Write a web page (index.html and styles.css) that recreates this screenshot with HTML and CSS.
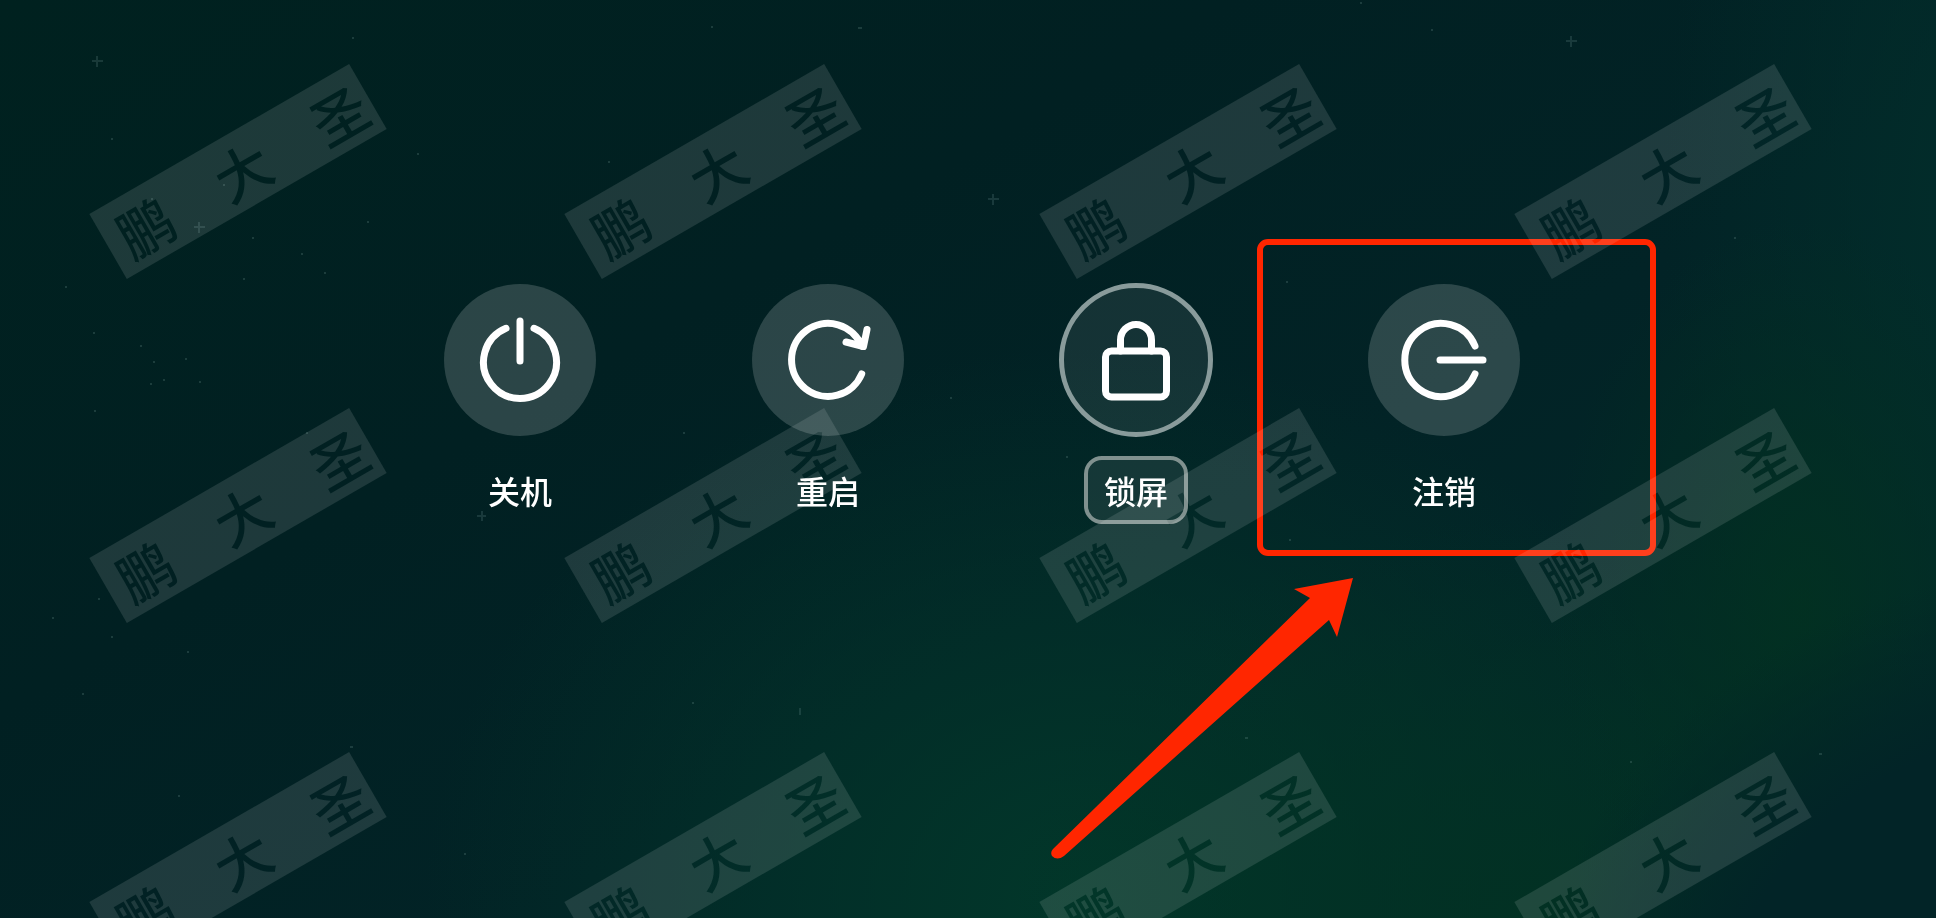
FILE: index.html
```html
<!DOCTYPE html>
<html lang="zh-CN">
<head>
<meta charset="utf-8">
<title>电源选项</title>
<link rel="stylesheet" href="styles.css">
</head>
<body>
<svg class="stars" aria-hidden="true">
  <g class="crosses">
    <path d="M92 61h11M97 56v11M194 227h11M199 222v11M1566 41h11M1571 36v11M988 199h11M993 194v11M477 516h9M482 511v10M800 708v7"/>
  </g>
  <g class="dots">
    <path d="M111 139h2M223 185h2M151 199h2M608 162h2M301 254h2M367 222h2M417 154h2M65 287h2M252 238h2M324 273h2M243 279h2M93 333h2M140 346h2M153 362h2M163 380h2M150 384h2M199 382h2M185 359h2M94 411h2M306 433h2M683 433h2M950 398h2M1734 238h2M858 28h4M711 27h2M1431 30h2M98 599h2M187 652h2M111 637h2M52 618h2M82 694h2M350 747h3M1245 738h3M1630 762h2M1819 754h3M692 703h2M178 796h2M464 854h2M1289 540h2M1066 457h2M1286 282h2M352 38h2M1360 3h2"/>
  </g>
</svg>
<main class="screen">
  <div class="options">
    <button class="option" type="button">
      <span class="disc">
        <svg class="icon" viewBox="-76 -76 152 152" aria-hidden="true"><path d="M-14-31.7A36.5 36.5 0 1 0 14-31.7M0-39V1"/></svg>
      </span>
      <span class="label">关机</span>
    </button>
    <button class="option" type="button">
      <span class="disc">
        <svg class="icon" viewBox="-76 -76 152 152" aria-hidden="true"><path d="M33.7 14A36.5 36.5 0 1 1 34-13.5M39-30.5L35.5-13.5L18-18"/></svg>
      </span>
      <span class="label">重启</span>
    </button>
    <button class="option selected" type="button">
      <span class="disc">
        <svg class="icon" viewBox="-76 -76 152 152" aria-hidden="true"><rect x="-30.5" y="-9" width="61" height="46" rx="6"/><path d="M-15.5-9V-20a15.5 15.5 0 0 1 31 0V-9"/></svg>
      </span>
      <span class="label">锁屏</span>
    </button>
    <button class="option" type="button">
      <span class="disc">
        <svg class="icon" viewBox="-76 -76 152 152" aria-hidden="true"><path d="M31-14A36.5 36.5 0 1 0 31 14M-4 0H39"/></svg>
      </span>
      <span class="label">注销</span>
    </button>
    <div class="highlight"></div>
    <svg class="arrow" viewBox="0 0 304 284" aria-hidden="true"><path d="M303 1L244 12L260 21L3 272Q0 275 2 279Q7 284 14 279L279 43L287 60Z"/></svg>
  </div>
</main>
<div class="watermarks">
  <div class="cell"><span class="mark">鹏　大　圣</span></div>
  <div class="cell"><span class="mark">鹏　大　圣</span></div>
  <div class="cell"><span class="mark">鹏　大　圣</span></div>
  <div class="cell"><span class="mark">鹏　大　圣</span></div>
  <div class="cell"><span class="mark">鹏　大　圣</span></div>
  <div class="cell"><span class="mark">鹏　大　圣</span></div>
  <div class="cell"><span class="mark">鹏　大　圣</span></div>
  <div class="cell"><span class="mark">鹏　大　圣</span></div>
  <div class="cell"><span class="mark">鹏　大　圣</span></div>
  <div class="cell"><span class="mark">鹏　大　圣</span></div>
  <div class="cell"><span class="mark">鹏　大　圣</span></div>
  <div class="cell"><span class="mark">鹏　大　圣</span></div>
</div>
</body>
</html>
```
FILE: styles.css
```css
* {
  box-sizing: border-box;
}

body {
  position: relative;
  margin: 0;
  min-height: 100vh;
  overflow: hidden;
  color: #fff;
  font-family: "Noto Sans CJK SC", sans-serif;
  background:
    radial-gradient(ellipse 25% 44% at 108% 112%, #022427 75%, transparent 115%),
    radial-gradient(ellipse 13% 42% at 93% 66%, rgba(2, 50, 32, .8), transparent 100%),
    radial-gradient(ellipse 28% 44% at 80% 100%, rgba(2, 50, 34, .85), transparent 100%),
    radial-gradient(ellipse 34% 60% at 56% 98%, rgba(2, 56, 42, .95), transparent 100%),
    radial-gradient(ellipse 16% 75% at 102% 22%, rgba(2, 46, 43, .9), transparent 100%),
    linear-gradient(150deg, #00211f 0%, #012022 35%, #022326 60%, #022a2a 100%);
}

.stars {
  position: absolute;
  inset: 0;
  width: 100%;
  height: 100%;
  stroke: #7fa29f;
  stroke-width: 2;
  fill: none;
}

.crosses {
  opacity: .2;
}

.dots {
  opacity: .22;
}

.screen {
  position: relative;
  display: flex;
  justify-content: center;
  padding: 283px 0 0 28px;
}

.options {
  position: relative;
  display: grid;
  grid-template-columns: repeat(4, 308px);
}

.option {
  display: flex;
  flex-direction: column;
  align-items: center;
  gap: 19px;
  padding: 0;
  border: 0;
  background: none;
  color: inherit;
  font: inherit;
  cursor: pointer;
}

.disc {
  display: flex;
  align-items: center;
  justify-content: center;
  width: 154px;
  height: 154px;
  border: 1px solid transparent;
  border-radius: 50%;
  background: rgba(255, 255, 255, .17) padding-box;
}

.icon {
  flex: none;
  width: 152px;
  height: 152px;
  fill: none;
  stroke: #fff;
  stroke-width: 7;
  stroke-linecap: round;
  stroke-linejoin: round;
}

.label {
  padding: 10px 16px;
  border: 4px solid transparent;
  border-radius: 18px;
  font-size: 32px;
  font-weight: 500;
  line-height: 40px;
}

.selected .disc {
  border: 5px solid #899b9b;
  background: rgba(255, 255, 255, .08);
}

.selected .label {
  border-color: #80918f;
  background: rgba(255, 255, 255, .08) padding-box;
}

.highlight {
  position: absolute;
  top: -44px;
  left: 891px;
  width: 399px;
  height: 317px;
  border: 6px solid #ff2600;
  border-radius: 11px;
}

.arrow {
  position: absolute;
  top: 294px;
  left: 684px;
  width: 304px;
  height: 284px;
  fill: #ff2600;
}

/* Screen blending lightens the bands and leaves the black glyphs see-through. */
.watermarks {
  position: absolute;
  inset: 0;
  display: grid;
  grid-template-columns: repeat(4, 475px);
  grid-auto-rows: 344px;
  overflow: hidden;
  pointer-events: none;
  mix-blend-mode: screen;
}

.cell {
  display: flex;
  align-items: center;
  justify-content: center;
  padding-bottom: 2px;
}

.mark {
  flex: none;
  width: 300px;
  padding-left: 14px;
  background: #1d1d1d;
  color: #000;
  font-size: 56px;
  font-weight: 500;
  line-height: 75px;
  white-space: nowrap;
  transform: rotate(-30deg);
}
```
